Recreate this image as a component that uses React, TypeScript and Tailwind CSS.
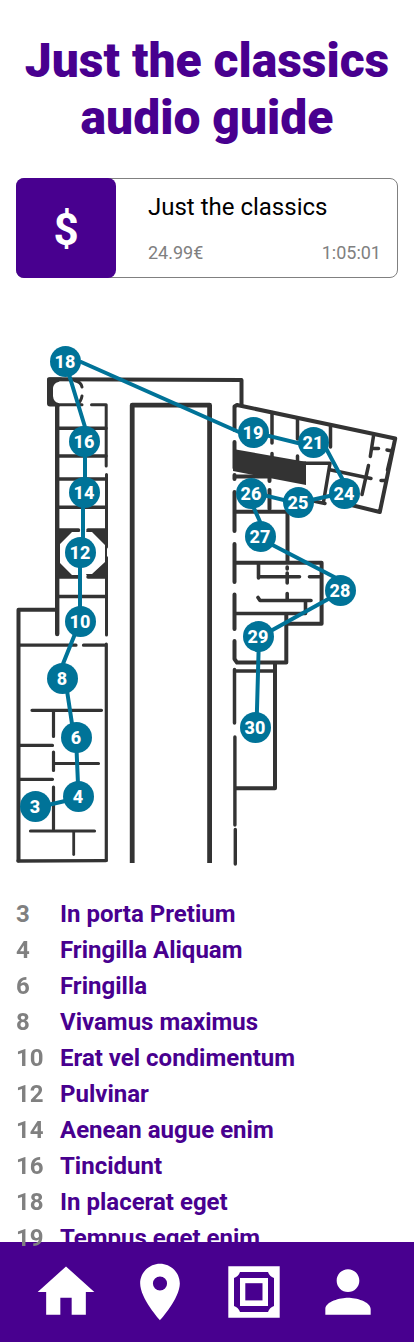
import React from "react";

type Stop = { id: number; x: number; y: number };

const stops: Stop[] = [
  { id: 3, x: 35.5, y: 806.5 },
  { id: 4, x: 78.5, y: 796.5 },
  { id: 6, x: 76.5, y: 737.5 },
  { id: 8, x: 62.5, y: 678.5 },
  { id: 10, x: 80.5, y: 621.5 },
  { id: 12, x: 80.5, y: 552.5 },
  { id: 14, x: 84.5, y: 492.5 },
  { id: 16, x: 84.5, y: 441.5 },
  { id: 18, x: 65.5, y: 361.5 },
  { id: 19, x: 253.5, y: 432.5 },
  { id: 21, x: 313.5, y: 442.5 },
  { id: 24, x: 344.5, y: 493.5 },
  { id: 25, x: 298.5, y: 502.5 },
  { id: 26, x: 251.5, y: 493.5 },
  { id: 27, x: 260.5, y: 536.5 },
  { id: 28, x: 340.5, y: 590.5 },
  { id: 29, x: 258.5, y: 636.5 },
  { id: 30, x: 255.5, y: 727.5 },
];

const tracks: [number, string][] = [
  [3, "In porta Pretium"],
  [4, "Fringilla Aliquam"],
  [6, "Fringilla"],
  [8, "Vivamus maximus"],
  [10, "Erat vel condimentum"],
  [12, "Pulvinar"],
  [14, "Aenean augue enim"],
  [16, "Tincidunt"],
  [18, "In placerat eget"],
  [19, "Tempus eget enim"],
];

function FloorPlan() {
  return (
    <svg viewBox="0 340 414 530" className="block w-full" role="img" aria-label="Museum floor plan">
      <g fill="none" stroke="#333" strokeLinecap="round" strokeLinejoin="round">
        {/* central courtyard */}
        <path strokeWidth="4.8" strokeLinecap="butt" d="M132.2 863V405.2H209.6V863" />

        {/* upper corridor */}
        <path strokeWidth="4" d="M49 379.3L241.5 380V405" />
        <path strokeWidth="3" d="M58 380.500Q52 382 51.500 388V396Q52 402.500 58 404.700H82M75 380.800Q81 382 82 387M82 396Q81 402 77 404" />

        {/* left wing */}
        <path strokeWidth="4.4" d="M57.200 405V634" />
        <path strokeWidth="3" d="M91.500 404.800H106.200V466M106.500 474.500V547M106.500 557.500V635" />
        <path strokeWidth="3.500" d="M58 428.300H106M58 456H106M58 479H106M58 507.300H106M58 530H78.500M88 530H106M58 577H78.500M88 577H106M58 596.500H106" />
        <path strokeWidth="4" d="M56 609.700H18.500V860.500" />
        <path strokeWidth="3.200" d="M19 645.200H76M83.500 645.200H106M106.300 644V860.500" />
        <path strokeWidth="3.400" d="M18 861L106 860.600" />
        <path strokeWidth="3.200" d="M32 710.300H101.500M53.500 711V736.500M20 745.400H52.500M53.500 752V770.500M54.500 763.500H98.500M20 779.300H52.500M53.500 787V829M30.500 831H94.500" />
        <path strokeWidth="2.800" d="M73.700 832V854.500" />

        {/* north-east gallery */}
        <path strokeWidth="4" d="M234.500 430V406.500L237 405L395.200 438.500L379.800 512L343 503" />
        <path strokeWidth="3.500" d="M272 412.500V443M272 453.500V457M297.500 419V439M297.500 456V461M330.500 426V447" />
        <path strokeWidth="3.500" d="M298 463.300H330L323.500 502M331 470L371 478.500M311 500.500L325 503.500" />
        <path strokeWidth="3.500" d="M373.500 436L370.300 456.500M368.500 465.500L362 494.500M373 448.500H378.500M387 450L392 451M381 480.500H386M392.500 449L387.500 470" />
        <path strokeWidth="4" d="M234.500 442V468M234.500 475V479M236 476.500H268.500M269.500 477V481M269.500 490V509M234.500 492V531" />

        {/* east rooms */}
        <path strokeWidth="4" d="M236 511.700H287.500V561M234.500 544V582M234.500 594.500V629M236 562.800H321.600V623.800H288" />
        <path strokeWidth="3.600" d="M258.500 564V578M258.500 576.800H299.500M309.500 576.800H320M287.200 567V569M287.200 573V583M287.200 593.500V600M258 597.500L260 600.500H311M305.500 601V613.500H236" />
        <path strokeWidth="4" d="M234.500 641V659L237 662.600H286.300V614" />
        <path strokeWidth="3.500" d="M234.500 669.500V723M236 671H274" />
        <path strokeWidth="4" d="M275 663V788.300H236" />
        <path strokeWidth="3.400" d="M234.900 737V825M235.300 829.500V864" />
      </g>
      <g fill="#333">
        <path d="M47 380Q47 377.500 50 377.500H62L52 384V400L60 406.500H50Q47 406.500 47 403.500Z" />
        <path d="M57 529H78L80 532H72L60 544V563L72 575H78V578H57ZM107 529H88L86 532H92L105 545V562L92 574H86L88 578H107Z" />
        <path d="M233 449L304 461.500H306V485L272 478.500L233 471Z" />
      </g>
      <path
        d="M65 361.500L85 427M80 361.500L240 432.500M85 441V492M83 492V552M80 552V621M80 621.500L62.500 665M66 684L74 737M76 737L78.500 796M78 798L35 808M253 432L314 447M321 439L344 482M345 492.500L298 503M298 503.500L251 492M247 493L262 526M260 538.500L340 580M340 592.500L258 638M259 636L256.500 727"
        fill="none"
        stroke="#007398"
        strokeWidth="4"
      />
      {stops.map((s) => (
        <g key={s.id}>
          <circle cx={s.x} cy={s.y} r="15.5" fill="#007398" />
          <text
            x={s.x - 0.5}
            y={s.y + 6}
            textAnchor="middle"
            className="fill-white font-['Roboto'] text-[18px] font-extrabold"
          >
            {s.id}
          </text>
        </g>
      ))}
    </svg>
  );
}

const icons = {
  Home: "M10 20v-6h4v6h5v-8h3L12 3 2 12h3v8z",
  Map: "M12 2C8.130 2 5 5.130 5 9c0 5.250 7 13 7 13s7-7.750 7-13c0-3.870-3.130-7-7-7zm0 9.500a2.500 2.500 0 0 1 0-5 2.500 2.500 0 0 1 0 5z",
  Profile:
    "M12 12c2.210 0 4-1.790 4-4s-1.790-4-4-4-4 1.790-4 4 1.790 4 4 4zm0 2c-2.670 0-8 1.340-8 4v2h16v-2c0-2.660-5.330-4-8-4z",
};

function NavLink({ label, children }: { label: string; children: React.ReactNode }) {
  return (
    <a href="#" aria-label={label} className="block size-17">
      {children}
    </a>
  );
}

function Glyph({ d }: { d: string }) {
  return (
    <svg viewBox="0 0 24 24" className="size-full fill-white">
      <path d={d} />
    </svg>
  );
}

export default function App() {
  return (
    <div className="min-h-screen bg-white font-['Roboto',sans-serif]">
      <main className="px-4 pt-8 pb-20">
        <h1 className="text-center text-[48px] leading-[57px] font-black text-[#48008f]">
          Just the classics audio guide
        </h1>

        <section className="mt-8 flex h-25 rounded-lg border border-[#808080]">
          <button
            type="button"
            aria-label="Buy"
            className="-my-px -ml-px flex w-25 shrink-0 items-center justify-center rounded-lg bg-[#48008f] pt-1 text-[44px] font-bold text-white"
          >
            $
          </button>
          <div className="flex flex-1 flex-col justify-between py-3.5 pr-4 pl-8">
            <h2 className="text-[24px] leading-7 text-black">Just the classics</h2>
            <div className="flex justify-between text-[18px] leading-5 text-[#808080]">
              <span>24.99€</span>
              <span>1:05:01</span>
            </div>
          </div>
        </section>

        <div className="-mx-4 mt-[62px]">
          <FloorPlan />
        </div>

        <ol className="mt-[26px] text-[24px] leading-9 font-bold">
          {tracks.map(([id, title]) => (
            <li key={id} className="flex">
              <span className="relative z-20 w-11 shrink-0 text-[#808080]">{id}</span>
              <a href="#" className="text-[#48008f]">
                {title}
              </a>
            </li>
          ))}
        </ol>
      </main>

      <nav className="fixed inset-x-0 bottom-0 z-10 flex h-25 items-center justify-between bg-[#48008f] px-8">
        <NavLink label="Home">
          <Glyph d={icons.Home} />
        </NavLink>
        <NavLink label="Map">
          <Glyph d={icons.Map} />
        </NavLink>
        <NavLink label="Exhibits">
          <svg viewBox="0 0 68 68" className="size-full">
            <path fill="#fff" d="M8.300 8.300H59.700V59.700H8.300Z" />
            <path
              fill="#48008f"
              d="M20 14H48Q49.500 18.500 54 20V48Q49.500 49.500 48 54H20Q18.500 49.500 14 48V20Q18.500 18.500 20 14Z"
            />
            <path fill="#fff" d="M20 20H48V48H20Z" />
            <path fill="#48008f" d="M25.300 25.200H42.500V42.400H25.300Z" />
          </svg>
        </NavLink>
        <NavLink label="Profile">
          <Glyph d={icons.Profile} />
        </NavLink>
      </nav>
    </div>
  );
}
